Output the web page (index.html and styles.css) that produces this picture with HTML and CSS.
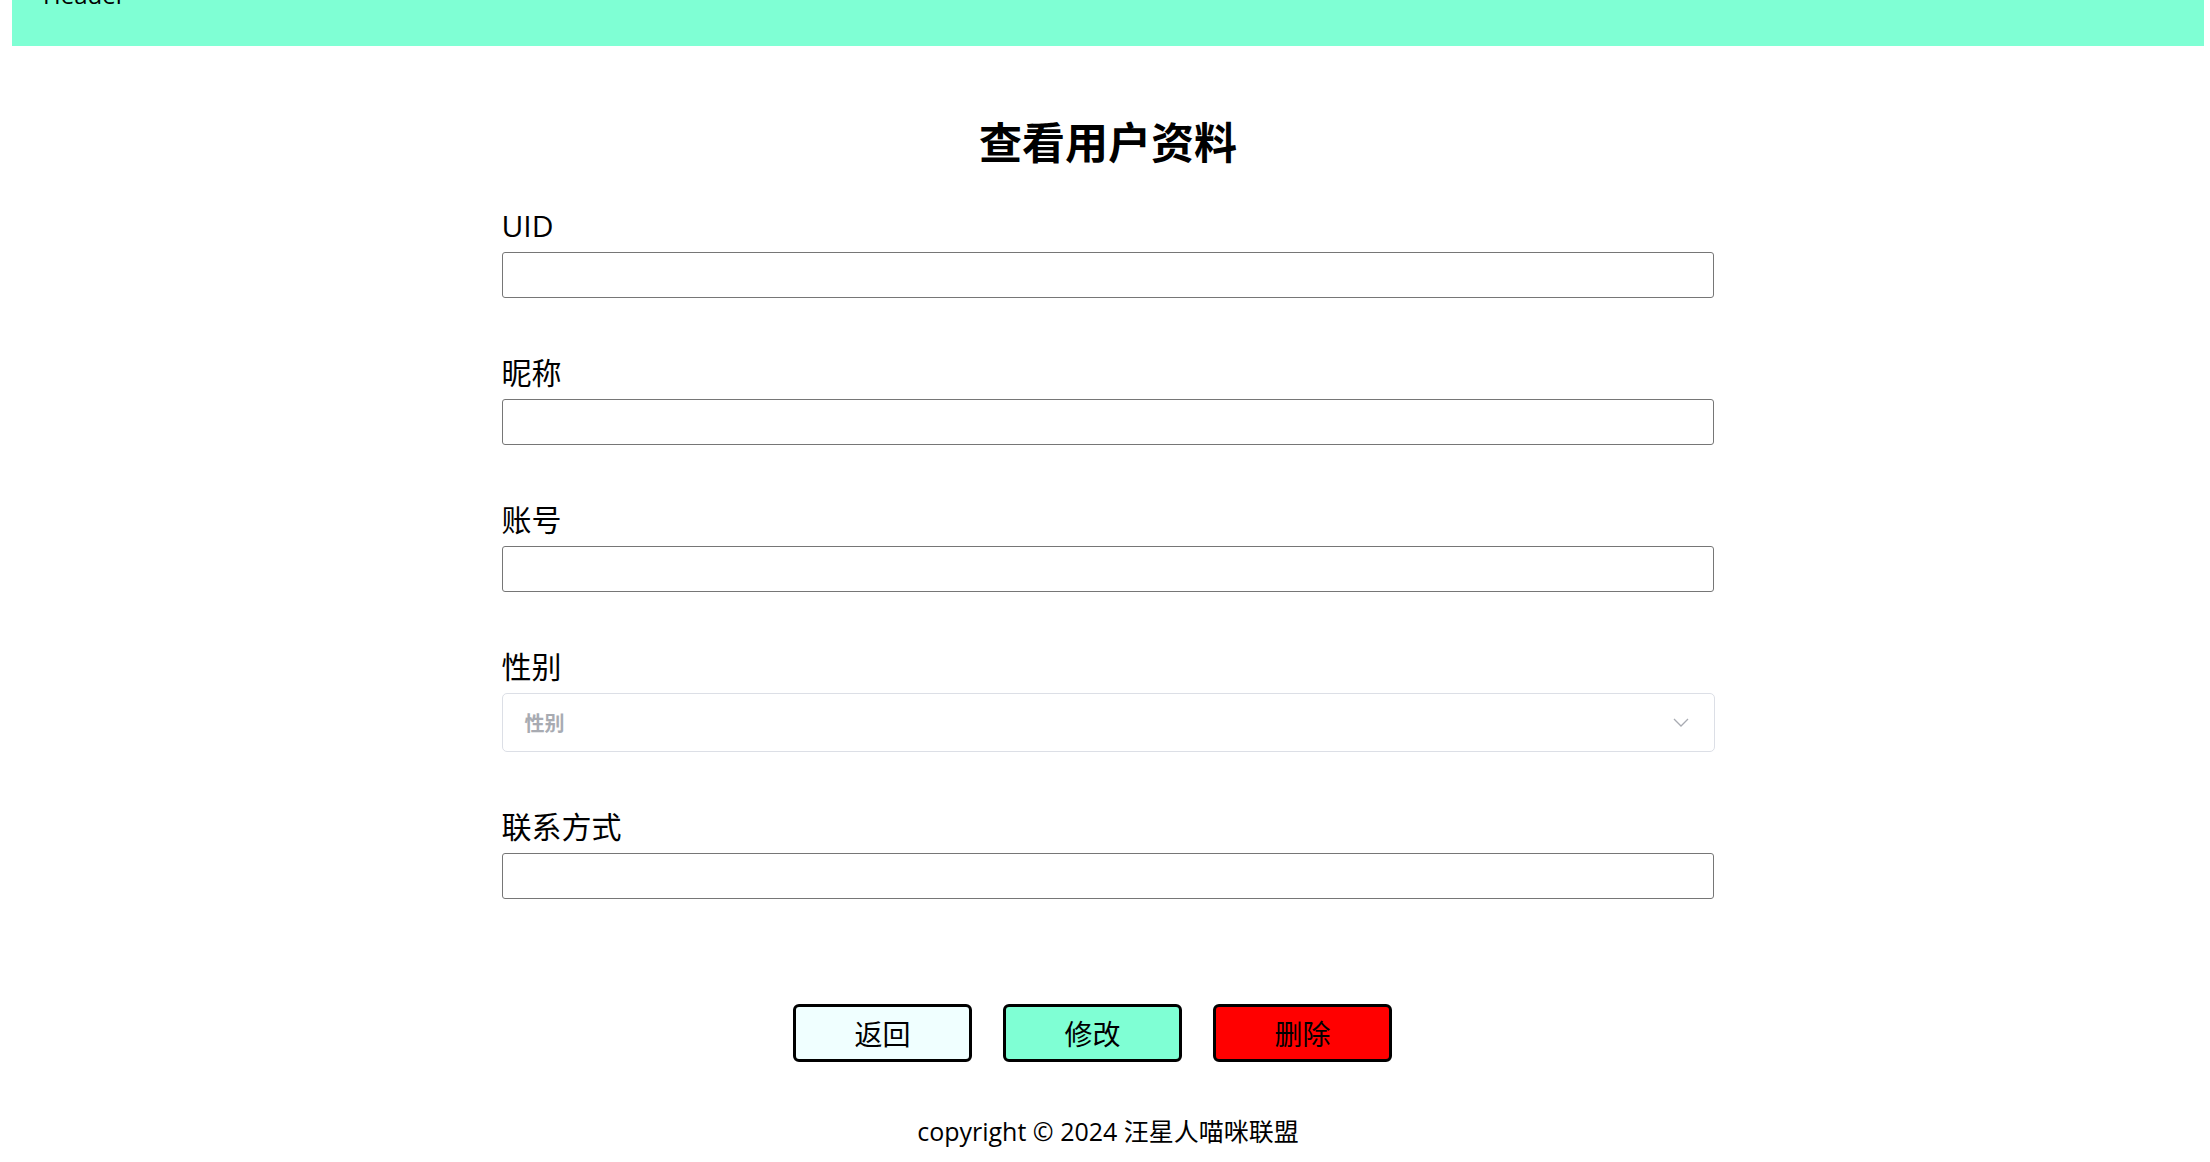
FILE: index.html
```html
<!DOCTYPE html>
<html lang="zh-CN">
<head>
<title>查看用户资料</title>
<meta charset="utf-8">
<meta name="viewport" content="width=device-width, initial-scale=1">
<link rel="stylesheet" href="styles.css">
</head>
<body>

<div class="wrap">
  <header class="top-bar">
    <div class="top-title">Header</div>
  </header>

  <main>
    <h2 class="page-title">查看用户资料</h2>

    <!-- USER INFO FORM -->
    <form class="user-form">
      <div class="field">
        <label class="field-label">UID</label>
        <input class="field-input" type="text">
      </div>
      <div class="field">
        <label class="field-label">昵称</label>
        <input class="field-input" type="text">
      </div>
      <div class="field">
        <label class="field-label">账号</label>
        <input class="field-input" type="text">
      </div>
      <div class="field">
        <label class="field-label">性别</label>
        <div class="select-box">
          <span class="select-placeholder">性别</span>
          <svg class="select-arrow" width="16" height="9" viewBox="0 0 16 9">
            <path d="M1 1 L8 8 L15 1" fill="none" stroke="#a8abb2" stroke-width="1.3"/>
          </svg>
        </div>
      </div>
      <div class="field">
        <label class="field-label">联系方式</label>
        <input class="field-input" type="text">
      </div>
    </form>

    <div class="actions">
      <button type="button" class="btn btn-back">返回</button>
      <button type="button" class="btn btn-edit">修改</button>
      <button type="button" class="btn btn-delete">删除</button>
    </div>
  </main>

  <footer class="copyright">copyright © 2024 汪星人喵咪联盟</footer>
</div>

</body>
</html>
```

FILE: styles.css
```css
* {
  box-sizing: border-box;
}

body {
  margin: 0;
  font-family: "Open Sans", "Noto Sans CJK SC", sans-serif;
  color: #000;
  background: #fff;
}

.wrap {
  margin: 0 6px 0 12px;
}

/* Header bar */
.top-bar {
  height: 46px;
  background-color: #7fffd4;
  padding-left: 31px;
  overflow: hidden;
}

.top-title {
  font-size: 24px;
  line-height: 24px;
  margin-top: -17px;
}

/* Title */
.page-title {
  margin: 64px 0 0;
  text-align: center;
  font-size: 43px;
  line-height: 60px;
  font-weight: 700;
  font-family: "Noto Sans CJK SC", sans-serif;
}

/* Form */
.user-form {
  width: 1213px;
  margin: 36px auto 0;
}

.field {
  margin-bottom: 55px;
}

.field:last-child {
  margin-bottom: 0;
}

.field-label {
  display: block;
  font-size: 30px;
  line-height: 40px;
  margin-bottom: 6px;
}

.field-input {
  display: block;
  width: 1212px;
  height: 46px;
  border: 1px solid #767676;
  border-radius: 3px;
  background: #fff;
}

.select-box {
  display: flex;
  align-items: center;
  justify-content: space-between;
  height: 59px;
  padding: 0 25px 0 22px;
  border: 1px solid #dcdfe6;
  border-radius: 5px;
}

.select-placeholder {
  font-family: "Noto Sans CJK SC", sans-serif;
  font-size: 20px;
  font-weight: 700;
  color: #a8abb2;
}

/* Buttons */
.actions {
  display: flex;
  justify-content: center;
  margin-top: 105px;
}

.btn {
  width: 179px;
  height: 58px;
  margin-right: 31px;
  border: 3px solid #000;
  border-radius: 6px;
  font-family: "Noto Sans CJK SC", sans-serif;
  font-size: 28px;
  color: #000;
  cursor: pointer;
}

.btn-back {
  background-color: #f0ffff;
}

.btn-edit {
  background-color: #7fffd4;
}

.btn-delete {
  background-color: #ff0000;
}

/* Footer */
.copyright {
  margin-top: 52px;
  text-align: center;
  font-size: 25px;
  line-height: 34px;
}
```
